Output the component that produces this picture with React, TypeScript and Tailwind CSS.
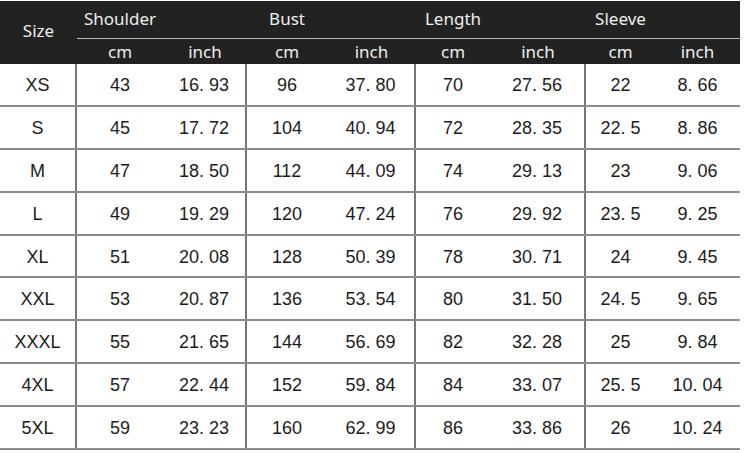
const cols = 'grid grid-cols-[77px_86px_84px_80px_89px_74px_96px_69px_85px]'

const rows: string[][] = [
  ['XS', '43', '16. 93', '96', '37. 80', '70', '27. 56', '22', '8. 66'],
  ['S', '45', '17. 72', '104', '40. 94', '72', '28. 35', '22. 5', '8. 86'],
  ['M', '47', '18. 50', '112', '44. 09', '74', '29. 13', '23', '9. 06'],
  ['L', '49', '19. 29', '120', '47. 24', '76', '29. 92', '23. 5', '9. 25'],
  ['XL', '51', '20. 08', '128', '50. 39', '78', '30. 71', '24', '9. 45'],
  ['XXL', '53', '20. 87', '136', '53. 54', '80', '31. 50', '24. 5', '9. 65'],
  ['XXXL', '55', '21. 65', '144', '56. 69', '82', '32. 28', '25', '9. 84'],
  ['4XL', '57', '22. 44', '152', '59. 84', '84', '33. 07', '25. 5', '10. 04'],
  ['5XL', '59', '23. 23', '160', '62. 99', '86', '33. 86', '26', '10. 24'],
]

const groups = [
  { name: 'Shoulder', w: 'w-[170px]', cm: 'w-[86px]' },
  { name: 'Bust', w: 'w-[169px]', cm: 'w-[80px]' },
  { name: 'Length', w: 'w-[170px]', cm: 'w-[74px]' },
  { name: 'Sleeve', w: 'w-[154px]', cm: 'w-[69px]' },
]

// columns that close a group get the vertical rule
const ruled = [0, 2, 4, 6]

export default function App() {
  return (
    <div className="w-[744px] h-[453px] bg-white pt-px">
      <div className="w-[740px]">
        {/* Header */}
        <div className="bg-[#222222] h-[63px] flex text-[#eeeeee] font-['Noto_Sans',sans-serif] text-[17px]">
          <div className="w-[77px] flex items-center justify-center pb-[4px]">Size</div>
          <div className="flex-1 flex flex-col">
            <div className="h-[38px] flex border-b border-[#bdbdbd]">
              {groups.map((g) => (
                <div key={g.name} className={`${g.w} flex`}>
                  <div className={`${g.cm} flex items-center justify-center pb-[2px]`}>{g.name}</div>
                </div>
              ))}
            </div>
            <div className="flex-1 grid grid-cols-[86px_84px_80px_89px_74px_96px_69px_85px] items-center text-center">
              {groups.flatMap((g) => [
                <span key={g.name + 'cm'}>cm</span>,
                <span key={g.name + 'in'}>inch</span>,
              ])}
            </div>
          </div>
        </div>

        {/* Body */}
        {rows.map((r) => (
          <div
            key={r[0]}
            className={`${cols} h-[42.9px] border-b-2 border-[#8c8c8c] text-[18px] text-[#1c1c1c] font-['Liberation_Sans',Arial,sans-serif]`}
          >
            {r.map((v, i) => (
              <div
                key={i}
                className={`flex items-center justify-center pt-[2px] ${ruled.includes(i) ? 'border-r-2 border-[#777777]' : ''}`}
              >
                {v}
              </div>
            ))}
          </div>
        ))}
      </div>
    </div>
  )
}
